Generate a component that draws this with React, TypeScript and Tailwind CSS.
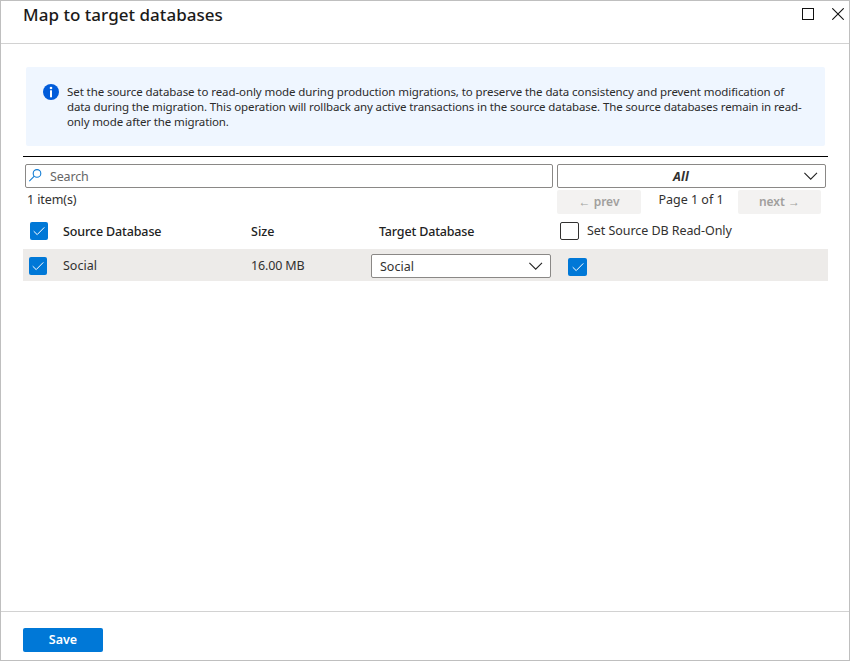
import React from "react";

function Check({ className = "" }: { className?: string }) {
  return (
    <span className={`flex h-[18px] shrink-0 items-center justify-center rounded-[2px] bg-[#0078d7] ${className}`}>
      <svg width="12" height="10" viewBox="0 0 12 10" fill="none" stroke="#fff" strokeWidth="1">
        <path d="M0.7 5.2 L4.2 8.6 L11.3 1.4" />
      </svg>
    </span>
  );
}

function Chevron() {
  return (
    <svg width="14" height="8" viewBox="0 0 14 8" fill="none" stroke="#222" strokeWidth="1.1" className="shrink-0">
      <path d="M0.4 0.8 L6.7 7.1 L13 0.8" />
    </svg>
  );
}

export default function App() {
  return (
    <div className="flex h-[661px] w-[850px] flex-col border border-[#bfbfbf] bg-white font-['Noto_Sans','Open_Sans',sans-serif] text-[12px] text-[#323130]">
      <header className="flex h-[43px] shrink-0 items-start border-b border-[#d2d2d2] pl-[22px]">
        <h1 className="mt-[2px] whitespace-nowrap text-[17px] leading-[24px] font-medium tracking-[0.03px] text-[#1b1a19]">
          Map to target databases
        </h1>
        <div className="mt-[7px] mr-[5px] ml-auto flex gap-[18px]">
          <svg width="12" height="12" viewBox="0 0 12 12" fill="none" stroke="#111">
            <rect x="0.5" y="0.5" width="11" height="11" />
          </svg>
          <svg width="12" height="12" viewBox="0 0 12 12" fill="none" stroke="#111" strokeWidth="1.1">
            <path d="M0.3 0.3 L11.7 11.7 M11.7 0.3 L0.3 11.7" />
          </svg>
        </div>
      </header>

      <main className="flex w-[827px] grow flex-col pl-[22px]">
        <section className="mt-[23px] mr-[3px] ml-[3px] flex h-[79px] shrink-0 rounded-[2px] bg-[#eff6ff] pt-[17px] pl-[17px]">
          <svg width="16" height="16" viewBox="0 0 16 16" className="shrink-0">
            <circle cx="8" cy="8" r="8" fill="#015cda" />
            <circle cx="8" cy="4" r="1.3" fill="#fff" />
            <rect x="7" y="6.3" width="2" height="7" fill="#fff" />
          </svg>
          <p className="ml-[8px] text-[11.5px] leading-[15px] whitespace-nowrap text-[#2b2b2b]">
            <span className="block tracking-[-0.085px]">Set the source database to read-only mode during production migrations, to preserve the data consistency and prevent modification of</span>
            <span className="block tracking-[-0.115px]">data during the migration. This operation will rollback any active transactions in the source database. The source databases remain in read-</span>
            <span className="block tracking-[-0.13px]">only mode after the migration.</span>
          </p>
        </section>

        <hr className="mt-[10px] h-px shrink-0 border-0 bg-black" />

        <div className="mt-[7px] flex h-[24px] shrink-0 gap-[4px] pr-[2px] pl-[2px]">
          <div className="flex w-[528px] items-center rounded-[2px] border border-[#8a8886] pl-[3px]">
            <svg width="13" height="13" viewBox="0 0 13 13" fill="none" stroke="#0f7bd4" strokeWidth="1.1" className="-mt-[2px]">
              <circle cx="8" cy="4.4" r="3.8" />
              <path d="M5.3 7.1 L0.3 12.2" />
            </svg>
            <span className="ml-[8px] pt-[2px] text-[12.5px] tracking-[-0.15px] text-[#666]">Search</span>
          </div>
          <div className="flex w-[269px] items-center rounded-[2px] border border-[#8a8886] pr-[7px]">
            <span className="grow pt-[2px] text-center text-[12.5px] font-bold tracking-[0.3px] italic">All</span>
            <Chevron />
          </div>
        </div>

        <div className="flex h-[26px] shrink-0 pl-[4px]">
          <span className="w-[530px] pt-[3px] text-[12.5px] leading-[18px] tracking-[-0.1px]">1 item(s)</span>
          <span className="mt-[2px] flex h-[24px] w-[84px] items-center justify-center rounded-[2px] bg-[#f3f2f1] text-[12px] font-semibold text-[#a19f9d]">← prev</span>
          <span className="w-[97px] pt-[3px] pl-[3px] text-center text-[12.5px] leading-[18px]">Page 1 of 1</span>
          <span className="mt-[2px] flex h-[24px] w-[83px] items-center justify-center rounded-[2px] bg-[#f3f2f1] text-[12px] font-semibold text-[#a19f9d]">next →</span>
        </div>

        <div className="flex h-[35px] shrink-0 items-center pl-[7px] text-[12.5px]">
          <Check className="-mt-px w-[18px]" />
          <span className="ml-[15px] w-[188px] pt-px font-medium tracking-[-0.13px] text-[#222]">Source Database</span>
          <span className="w-[128px] pt-px font-medium text-[#222]">Size</span>
          <span className="w-[181px] pt-px font-medium tracking-[-0.16px] text-[#222]">Target Database</span>
          <span className="-mt-px h-[18px] w-[19px] rounded-[2px] border border-[#323130] bg-white" />
          <span className="ml-[8px] tracking-[-0.06px]">Set Source DB Read-Only</span>
        </div>

        <div className="flex h-[32px] shrink-0 items-center bg-[#edebe9] pl-[6px] text-[12.5px]">
          <Check className="mt-[2px] w-[18px]" />
          <span className="ml-[16px] w-[188px] pt-[2px]">Social</span>
          <span className="w-[120px] pt-[2px] tracking-[-0.15px]">16.00 MB</span>
          <div className="mt-[2px] flex h-[24px] w-[180px] items-center justify-between rounded-[2px] border border-[#8a8886] bg-white pr-[7px] pl-[8px]">
            <span className="pt-[2px]">Social</span>
            <Chevron />
          </div>
          <Check className="mt-[4px] ml-[17px] w-[19px]" />
        </div>
      </main>

      <footer className="flex h-[49px] shrink-0 items-start border-t border-[#d2d2d2] pt-[16px] pl-[22px]">
        <button className="h-[24px] w-[80px] rounded-[2px] bg-[#0078d7] text-[12.5px] font-semibold text-white">Save</button>
      </footer>
    </div>
  );
}
